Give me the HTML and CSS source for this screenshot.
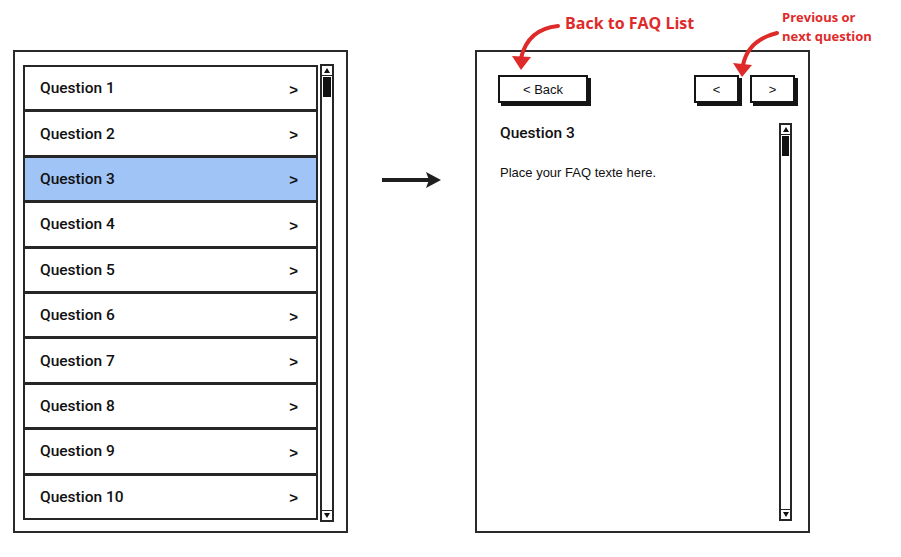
FILE: index.html
```html
<!DOCTYPE html>
<html lang="en">
<head>
    <meta charset="UTF-8">
    <title>FAQ Flow</title>
    <link rel="stylesheet" href="styles.css">
</head>
<body>

<div class="stage">

    <!-- FAQ list screen -->
    <section class="panel list-panel">
        <ul class="faq-list">
            <li class="faq-item"><span>Question 1</span><span class="chev">&gt;</span></li>
            <li class="faq-item"><span>Question 2</span><span class="chev">&gt;</span></li>
            <li class="faq-item selected"><span>Question 3</span><span class="chev">&gt;</span></li>
            <li class="faq-item"><span>Question 4</span><span class="chev">&gt;</span></li>
            <li class="faq-item"><span>Question 5</span><span class="chev">&gt;</span></li>
            <li class="faq-item"><span>Question 6</span><span class="chev">&gt;</span></li>
            <li class="faq-item"><span>Question 7</span><span class="chev">&gt;</span></li>
            <li class="faq-item"><span>Question 8</span><span class="chev">&gt;</span></li>
            <li class="faq-item"><span>Question 9</span><span class="chev">&gt;</span></li>
            <li class="faq-item"><span>Question 10</span><span class="chev">&gt;</span></li>
        </ul>
        <div class="scrollbar">
            <div class="sb-btn"><i class="tri up"></i></div>
            <div class="sb-thumb"></div>
            <div class="sb-track"></div>
            <div class="sb-btn bottom"><i class="tri down"></i></div>
        </div>
    </section>

    <!-- transition arrow -->
    <div class="flow-arrow">
        <svg width="62" height="20" viewBox="0 0 62 20">
            <line x1="1" y1="10" x2="48" y2="10" stroke="#1f1f1f" stroke-width="4"/>
            <polygon points="45,2 60,10 45,18 48,10" fill="#1f1f1f"/>
        </svg>
    </div>

    <!-- FAQ detail screen -->
    <section class="panel detail-panel">
        <div class="toolbar">
            <button class="btn back-btn">&lt; Back</button>
            <div class="nav">
                <button class="btn nav-btn">&lt;</button>
                <button class="btn nav-btn">&gt;</button>
            </div>
        </div>
        <div class="detail-body">
            <article class="answer">
                <h2>Question 3</h2>
                <p>Place your FAQ texte here.</p>
            </article>
            <div class="scrollbar tall">
                <div class="sb-btn"><i class="tri up"></i></div>
                <div class="sb-thumb"></div>
                <div class="sb-track"></div>
                <div class="sb-btn bottom"><i class="tri down"></i></div>
            </div>
        </div>
    </section>

    <!-- red callouts -->
    <svg class="callout-arrows" width="901" height="100" viewBox="0 0 901 100">
        <path d="M558 26 Q528 29 521 58" fill="none" stroke="#df2a2a" stroke-width="4" stroke-linecap="round"/>
        <polygon points="512,56 531,57 521,70" fill="#df2a2a"/>
        <path d="M777 33 Q748 40 743 65" fill="none" stroke="#df2a2a" stroke-width="4" stroke-linecap="round"/>
        <polygon points="733,63 752,65 742,77" fill="#df2a2a"/>
    </svg>
    <span class="note note-back">Back to FAQ List</span>
    <span class="note note-nav">Previous or<br>next question</span>

</div>

</body>
</html>
```

FILE: styles.css
```css
/* Page */
body {
    margin: 0;
    background: #fff;
    font-family: "Liberation Sans", Arial, sans-serif;
    color: #111;
}

.stage {
    position: relative;
    width: 901px;
    height: 557px;
    box-sizing: border-box;
    padding: 50px 0 0 13px;
    display: flex;
    align-items: flex-start;
}

/* Screens */
.panel {
    box-sizing: border-box;
    width: 335px;
    height: 483px;
    border: 2px solid #2a2a2a;
    background: #fff;
}

.list-panel {
    display: flex;
    gap: 2px;
    padding: 13px 12px 0 8px;
}

/* Question list */
.faq-list {
    list-style: none;
    margin: 0;
    padding: 0;
    width: 295px;
}

.faq-item {
    box-sizing: border-box;
    height: 46.4px;
    border: 2px solid #262626;
    margin-top: -1px;
    display: flex;
    align-items: center;
    justify-content: space-between;
    padding: 0 18px 0 15px;
    font-family: Roboto, "Liberation Sans", sans-serif;
    font-size: 15.5px;
    font-weight: 500;
}

.faq-item:first-child {
    margin-top: 0;
}

.faq-item.selected {
    background: #a0c4f6;
}

.chev {
    font-family: "Liberation Sans", Arial, sans-serif;
    font-weight: bold;
    font-size: 15px;
    padding-top: 2px;
}

/* Scrollbars */
.scrollbar {
    box-sizing: border-box;
    width: 14px;
    height: 458px;
    margin-top: -1px;
    border: 2px solid #262626;
    display: flex;
    flex-direction: column;
}

.scrollbar.tall {
    width: 13px;
    height: 398px;
    margin: 0 3px 0 0;
}

.sb-btn {
    height: 9px;
    border-bottom: 1px solid #262626;
    display: flex;
    align-items: center;
    justify-content: center;
}

.sb-btn.bottom {
    border-bottom: none;
    border-top: 1px solid #262626;
}

.tri {
    width: 0;
    height: 0;
    border-left: 3px solid transparent;
    border-right: 3px solid transparent;
}

.tri.up {
    border-bottom: 5px solid #111;
}

.tri.down {
    border-top: 5px solid #111;
}

.sb-thumb {
    height: 20px;
    margin: 1px 1px 0;
    background: #111;
}

.sb-track {
    flex: 1;
}

/* Arrow between screens */
.flow-arrow {
    width: 127px;
    display: flex;
    justify-content: center;
    padding-top: 120px;
    box-sizing: border-box;
}

/* Detail screen */
.detail-panel {
    padding: 23px 13px 0 21px;
    display: flex;
    flex-direction: column;
}

.toolbar {
    display: flex;
    justify-content: space-between;
    align-items: flex-start;
}

.nav {
    display: flex;
    gap: 11px;
}

.btn {
    box-sizing: border-box;
    height: 28px;
    border: 2px solid #151515;
    background: #fff;
    box-shadow: 3px 3px 0 #151515;
    font-family: "Liberation Sans", Arial, sans-serif;
    font-size: 13px;
    color: #111;
    padding: 0;
}

.back-btn {
    width: 90px;
}

.nav-btn {
    width: 45px;
}

.detail-body {
    flex: 1;
    display: flex;
    justify-content: space-between;
    margin-top: 20px;
}

.answer h2 {
    margin: 1px 0 0 2px;
    font-family: Roboto, "Liberation Sans", sans-serif;
    font-weight: 500;
    font-size: 15.5px;
    line-height: 18px;
}

.answer p {
    margin: 23px 0 0 2px;
    font-size: 13px;
    line-height: 16px;
}

/* Callouts */
.callout-arrows {
    position: absolute;
    top: 0;
    left: 0;
    pointer-events: none;
}

.note {
    position: absolute;
    font-family: "Open Sans", sans-serif;
    font-weight: bold;
    color: #df2a2a;
}

.note-back {
    left: 565px;
    top: 12px;
    font-size: 16px;
    line-height: 22px;
}

.note-nav {
    left: 782px;
    top: 8px;
    font-size: 13px;
    line-height: 19px;
}
```
